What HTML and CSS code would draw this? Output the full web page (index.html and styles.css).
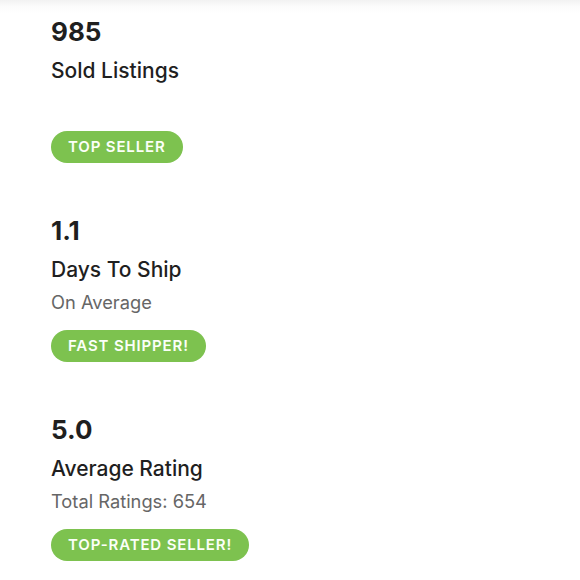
FILE: index.html
```html
<!DOCTYPE html>
<html lang="en">
<head>
<meta charset="utf-8">
<title>Seller Stats</title>
<link rel="stylesheet" href="styles.css">
</head>
<body>
<main class="stats">
  <section class="stat">
    <div class="value">985</div>
    <div class="label">Sold Listings</div>
    <div class="sub">&nbsp;</div>
    <span class="badge">TOP SELLER</span>
  </section>
  <section class="stat">
    <div class="value">1.1</div>
    <div class="label">Days To Ship</div>
    <div class="sub">On Average</div>
    <span class="badge">FAST SHIPPER!</span>
  </section>
  <section class="stat">
    <div class="value">5.0</div>
    <div class="label">Average Rating</div>
    <div class="sub">Total Ratings: 654</div>
    <span class="badge">TOP-RATED SELLER!</span>
  </section>
</main>
</body>
</html>
```

FILE: styles.css
```css
html, body {
  margin: 0;
  padding: 0;
}
body {
  background: linear-gradient(#f2f2f2 0, #fbfbfb 6px, #ffffff 14px) no-repeat;
  background-color: #fff;
  font-family: Inter, "Liberation Sans", sans-serif;
  color: #222;
}
.stats {
  display: flex;
  flex-direction: column;
  gap: 51px;
  padding: 15px 0 0 51px;
}
.stat {
  display: flex;
  flex-direction: column;
  align-items: flex-start;
}
.value {
  font-size: 26px;
  line-height: 34px;
  font-weight: 700;
  color: #1f1f1f;
}
.label {
  margin-top: 8px;
  font-size: 21px;
  line-height: 28px;
  font-weight: 500;
  color: #1f1f1f;
}
.sub {
  margin-top: 5px;
  font-size: 18.3px;
  line-height: 26px;
  font-weight: 400;
  color: #666;
}
.badge {
  margin-top: 15px;
  height: 32px;
  line-height: 32px;
  padding: 0 17px;
  border-radius: 16px;
  background: #7dc24f;
  color: #fbfff8;
  font-size: 15px;
  font-weight: 600;
  letter-spacing: 0.85px;
}
```
